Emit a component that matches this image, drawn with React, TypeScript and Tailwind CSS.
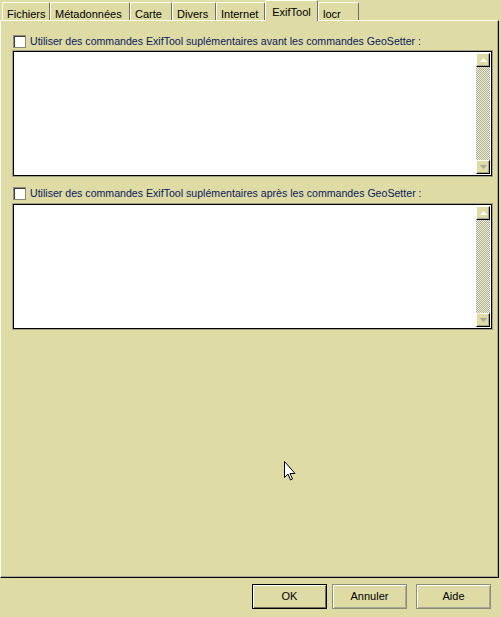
const tabs = [
  { label: "Fichiers", w: "w-[48px]" },
  { label: "Métadonnées", w: "w-[80px]" },
  { label: "Carte", w: "w-[42px]" },
  { label: "Divers", w: "w-[44px]" },
  { label: "Internet", w: "w-[49px]" },
  { label: "ExifTool", w: "w-[53px]", active: true },
  { label: "locr", w: "w-[41px]" },
];

function ScrollButton({ down }: { down?: boolean }) {
  return (
    <div className="flex h-[14px] w-[14px] items-center justify-center border-t border-l border-t-white border-l-white border-r border-b border-r-black border-b-black bg-[#dedba4] shadow-[inset_-1px_-1px_0_#a8a590]">
      <svg width="7" height="4" viewBox="0 0 7 4">
        {down ? (
          <path d="M0 0h7L3.5 4z" fill="#a8a590" />
        ) : (
          <path d="M0 4h7L3.5 0z" fill="#fff" />
        )}
      </svg>
    </div>
  );
}

function Memo() {
  return (
    <div className="flex h-[127px] w-[481px] border border-[#a09d88] bg-white shadow-[inset_1px_1px_0_#000,inset_-1px_-1px_0_#000]">
      <div className="flex-1" />
      <div className="my-[2px] mr-[2px] flex w-[14px] flex-col">
        <ScrollButton />
        <div className="flex-1 bg-[image:repeating-conic-gradient(#b0ad95_0%_25%,#f0efd8_0%_50%)] bg-[length:2px_2px]" />
        <ScrollButton down />
      </div>
    </div>
  );
}

function Check({ label }: { label: string }) {
  return (
    <div className="flex h-[13px] items-center gap-[4px] pl-[12px]">
      <div className="h-[13px] w-[13px] border border-[#8a8775] bg-white shadow-[inset_1px_1px_0_#404040]" />
      <span className="text-[10.6px] leading-none text-[#0a1a5c]">{label}</span>
    </div>
  );
}

function Button({ label, def }: { label: string; def?: boolean }) {
  return (
    <div
      className={
        "flex h-[25px] w-[75px] items-center justify-center bg-[#dedba4] text-[11px] text-black " +
        (def
          ? "border border-black shadow-[inset_1px_1px_0_#fff,inset_-1px_-1px_0_#716f64]"
          : "border border-[#8e8b77] shadow-[inset_1px_1px_0_#fff,inset_-1px_-1px_0_#aca899]")
      }
    >
      {label}
    </div>
  );
}

export default function App() {
  return (
    <div
      className="relative flex h-[617px] w-[501px] flex-col bg-[#dedba4]"
      style={{ fontFamily: '"Liberation Sans", Arial, sans-serif' }}
    >
      <div className="relative z-10 flex h-[20px] items-end pl-[2px]">
        {tabs.map((t) => (
          <div
            key={t.label}
            className={
              t.w +
              " flex items-start rounded-t-[2px] border-t border-l border-r border-t-white border-l-white border-r-[#716f64] bg-[#dedba4] text-[11px] text-black " +
              (t.active
                ? "-mb-px h-[21px] justify-center pt-[3px]"
                : "h-[18px] pl-[4px] pt-[3px]")
            }
          >
            {t.label}
          </div>
        ))}
      </div>
      <div className="flex h-[558px] w-[499px] flex-col border-t border-l border-t-white border-l-white border-r border-b border-r-black border-b-black pt-[14px] shadow-[inset_-1px_-1px_0_#aca899]">
        <Check label="Utiliser des commandes ExifTool suplémentaires avant les commandes GeoSetter :" />
        <div className="mt-[2px] pl-[11px]">
          <Memo />
        </div>
        <div className="mt-[10px]">
          <Check label="Utiliser des commandes ExifTool suplémentaires après les commandes GeoSetter :" />
        </div>
        <div className="mt-[3px] pl-[11px]">
          <Memo />
        </div>
      </div>
      <div className="flex justify-end pt-[6px] pr-[10px]">
        <div className="flex gap-[5px]">
          <Button label="OK" def />
          <Button label="Annuler" />
        </div>
        <div className="ml-[9px]">
          <Button label="Aide" />
        </div>
      </div>
      <svg
        className="absolute left-[284px] top-[461px]"
        width="12"
        height="21"
        viewBox="0 0 12 21"
      >
        <path
          d="M0.5 0.5v16l3.5-3.5 2.5 6 2-1-2.5-5.5h5z"
          fill="#fff"
          stroke="#000"
          strokeWidth="1"
        />
      </svg>
    </div>
  );
}
